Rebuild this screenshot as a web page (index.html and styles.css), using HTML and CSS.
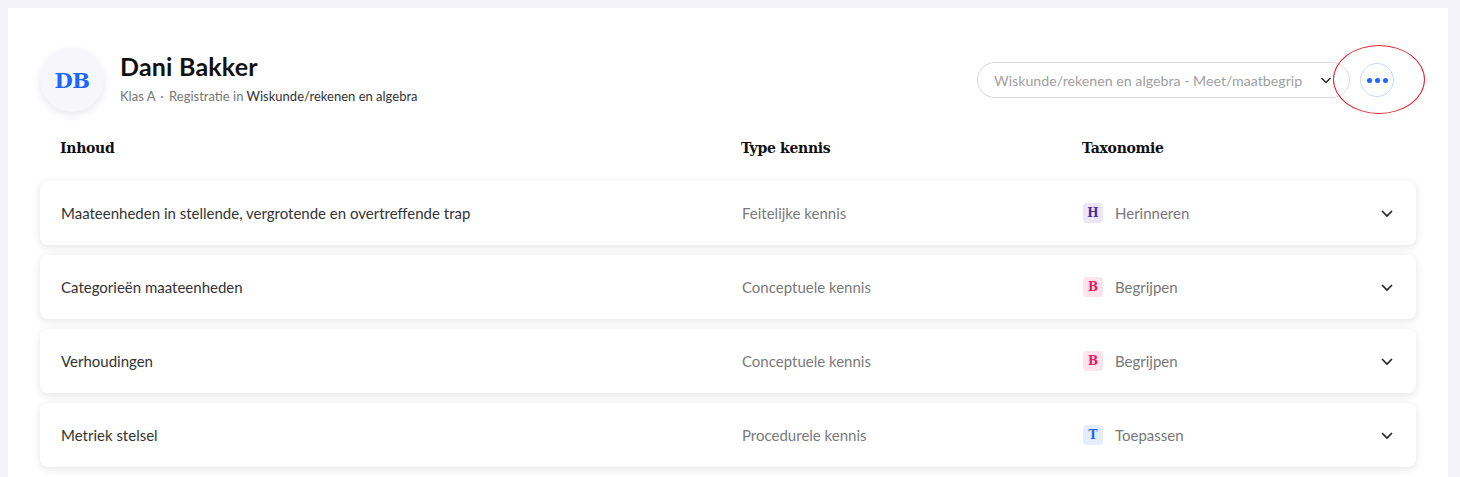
FILE: index.html
```html
<!DOCTYPE html>
<html lang="nl">
<head>
<meta charset="utf-8">
<title>Dani Bakker</title>
<link rel="stylesheet" href="styles.css">
</head>
<body>
<main class="card">
  <header class="profile">
    <div class="who">
      <div class="avatar">DB</div>
      <div class="names">
        <h1 class="name">Dani Bakker</h1>
        <p class="meta">Klas A <span class="sep">·</span> Registratie in <span class="strong">Wiskunde/rekenen en algebra</span></p>
      </div>
    </div>
    <div class="actions">
      <button class="select">
        <span class="select-text">Wiskunde/rekenen en algebra - Meet/maatbegrip</span>
        <svg width="14" height="14" viewBox="0 0 14 14"><path d="M2.5 5l4.5 4.5L11.5 5" fill="none" stroke="#222" stroke-width="1.4"/></svg>
      </button>
      <div class="more-wrap">
        <button class="more"><span class="dot"></span><span class="dot"></span><span class="dot"></span></button>
        <span class="ring"></span>
      </div>
    </div>
  </header>

  <div class="thead">
    <span>Inhoud</span>
    <span>Type kennis</span>
    <span>Taxonomie</span>
  </div>

  <ul class="rows">
    <li class="row">
      <span class="c-title">Maateenheden in stellende, vergrotende en overtreffende trap</span>
      <span class="c-type">Feitelijke kennis</span>
      <span class="c-tax"><span class="badge b-h">H</span>Herinneren</span>
      <svg class="chev" width="16" height="16" viewBox="0 0 16 16"><path d="M3 6l5 5 5-5" fill="none" stroke="#222" stroke-width="1.6"/></svg>
    </li>
    <li class="row">
      <span class="c-title">Categorieën maateenheden</span>
      <span class="c-type">Conceptuele kennis</span>
      <span class="c-tax"><span class="badge b-b">B</span>Begrijpen</span>
      <svg class="chev" width="16" height="16" viewBox="0 0 16 16"><path d="M3 6l5 5 5-5" fill="none" stroke="#222" stroke-width="1.6"/></svg>
    </li>
    <li class="row">
      <span class="c-title">Verhoudingen</span>
      <span class="c-type">Conceptuele kennis</span>
      <span class="c-tax"><span class="badge b-b">B</span>Begrijpen</span>
      <svg class="chev" width="16" height="16" viewBox="0 0 16 16"><path d="M3 6l5 5 5-5" fill="none" stroke="#222" stroke-width="1.6"/></svg>
    </li>
    <li class="row">
      <span class="c-title">Metriek stelsel</span>
      <span class="c-type">Procedurele kennis</span>
      <span class="c-tax"><span class="badge b-t">T</span>Toepassen</span>
      <svg class="chev" width="16" height="16" viewBox="0 0 16 16"><path d="M3 6l5 5 5-5" fill="none" stroke="#222" stroke-width="1.6"/></svg>
    </li>
  </ul>
</main>
</body>
</html>
```

FILE: styles.css
```css
* { box-sizing: border-box; }
html, body { height: 100%; }
body {
  margin: 0;
  padding: 8px 12px 0 8px;
  background: #f3f2f8;
  font-family: "Lato", "Liberation Sans", sans-serif;
  color: #222;
  overflow: hidden;
}
.card {
  background: #fff;
  width: 1440px;
  min-height: 100%;
  padding: 40px 32px 0 32px;
}
.profile {
  display: flex;
  justify-content: space-between;
  align-items: flex-start;
}
.who { display: flex; align-items: center; gap: 16px; }
.avatar {
  width: 64px; height: 64px;
  border-radius: 50%;
  background: #f7f6fb;
  box-shadow: 0 3px 8px rgba(40, 30, 80, 0.10);
  display: flex; align-items: center; justify-content: center;
  color: #1a66ff;
  font-family: "DejaVu Serif", "Liberation Serif", serif;
  font-weight: bold;
  font-size: 21px;
  letter-spacing: -0.5px;
}
.names { display: flex; flex-direction: column; margin-top: -6px; }
.name {
  margin: 0;
  font-size: 25px;
  font-weight: 700;
  color: #111;
  line-height: 30px;
  letter-spacing: 0.2px;
}
.meta {
  margin: 7px 0 0;
  font-size: 13px;
  color: #777;
  line-height: 16px;
}
.meta .sep { margin: 0 2px; }
.meta .strong { color: #333; }
.actions { display: flex; align-items: center; gap: 10px; margin-top: 14px; }
.select {
  display: flex; align-items: center; gap: 8px;
  height: 36px;
  width: 373px;
  padding: 0 16px 0 16px;
  border: 1px solid #d8d8d8;
  border-radius: 18px;
  background: #fff;
  font-family: inherit;
  font-size: 14.2px;
  color: #a0a0a0;
  justify-content: space-between;
}
.select-text { white-space: nowrap; text-align: left; }
.more-wrap { position: relative; width: 34px; height: 34px; margin-right: 22px; }
.more {
  width: 34px; height: 34px;
  border-radius: 50%;
  border: 1px solid #c6dafc;
  background: #fff;
  display: flex; align-items: center; justify-content: center; gap: 3px;
  padding: 0;
}
.dot { width: 5px; height: 5px; border-radius: 50%; background: #1a66ff; }
.ring {
  position: absolute;
  left: -27px; top: -18px;
  width: 92px; height: 69px;
  border: 1px solid #e0242c;
  border-radius: 50%;
  pointer-events: none;
}
.thead, .row {
  display: grid;
  grid-template-columns: 681px 341px 1fr 24px;
  align-items: center;
  padding: 0 21px;
}
.thead {
  margin-top: 18px;
  height: 36px;
  font-family: "DejaVu Serif", "Liberation Serif", serif;
  font-weight: bold;
  font-size: 14px;
  letter-spacing: -0.3px;
  color: #111;
  padding-left: 20px;
}
.rows {
  list-style: none;
  margin: 15px 0 0;
  padding: 0;
  display: flex; flex-direction: column; gap: 10px;
}
.row {
  height: 64px;
  background: #fff;
  border-radius: 8px;
  box-shadow: 0 2px 8px rgba(30, 30, 60, 0.12);
  font-size: 15px;
}
.c-title { color: #333; }
.c-type { color: #7a7a7a; }
.c-tax { display: flex; align-items: center; gap: 12px; color: #777; }
.badge {
  width: 20px; height: 20px;
  border-radius: 4px;
  display: flex; align-items: center; justify-content: center;
  font-family: "DejaVu Serif", "Liberation Serif", serif;
  font-weight: bold;
  font-size: 12px;
}
.b-h { background: #ece6f8; color: #4a2f91; }
.b-b { background: #fde3ec; color: #ee1860; }
.b-t { background: #e4edfd; color: #1a66ff; }
.chev { justify-self: end; }
```
